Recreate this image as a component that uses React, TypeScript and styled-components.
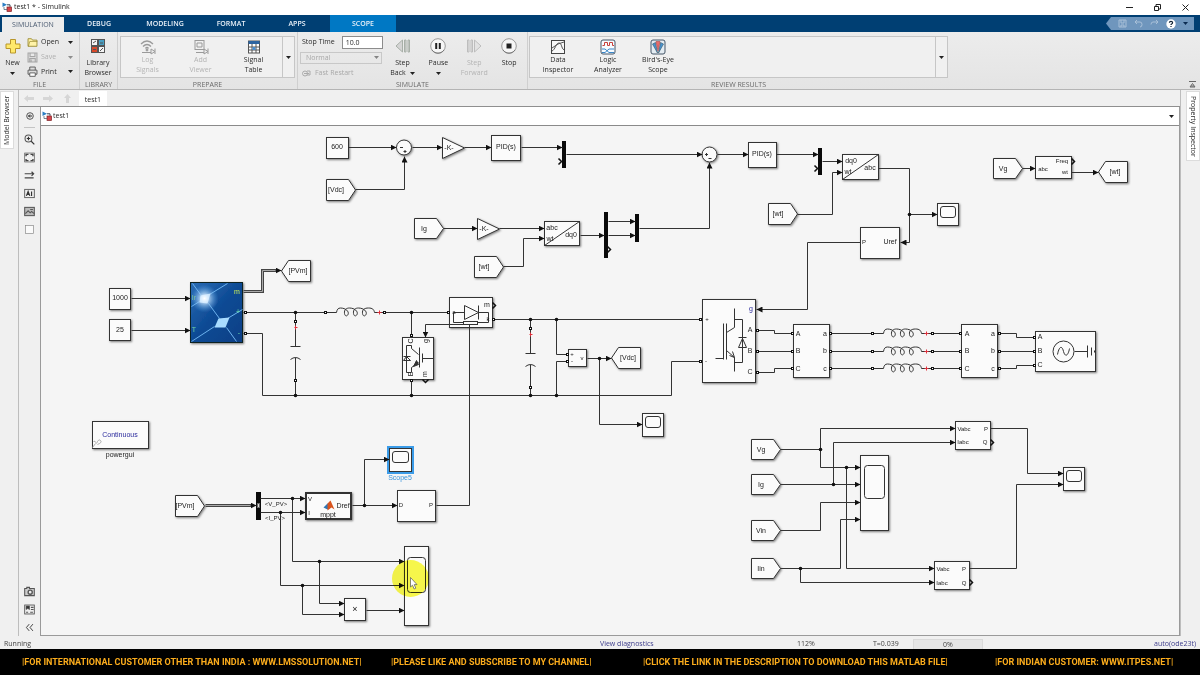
import React from "react";
import styled, { createGlobalStyle, css } from "styled-components";

const GlobalStyle = createGlobalStyle`
  * { box-sizing: border-box; }
  html, body { margin: 0; height: 100%; overflow: hidden; }
  body { font-family: "Open Sans", "Noto Sans", sans-serif; font-size: 7px; line-height: 10px; color: #2b2b2b; background: #f0f0f0; }
  button, input, select { font: inherit; color: inherit; margin: 0; padding: 0; border: 0; background: none; }
  svg { display: block; }
`;

const line = "#333";

/* ---------- window frame ---------- */

const Window = styled.div`
  min-height: 100vh;
  display: flex;
  flex-direction: column;
`;

const TitleBar = styled.header`
  height: 15px;
  flex: none;
  display: flex;
  align-items: center;
  gap: 2px;
  padding: 0 10px 1px 2px;
  background: #fff;
  color: #222;
`;

const WindowButtons = styled.div`
  margin-left: auto;
  display: flex;
  gap: 19px;
`;

const IconButton = styled.button`
  display: flex;
  align-items: center;
  justify-content: center;
  min-width: 9px;
`;

const TabBar = styled.nav`
  height: 17px;
  flex: none;
  display: flex;
  background: #003f73;
`;

const RibbonTab = styled.button<{ $kind?: "active" | "context" }>`
  width: 66px;
  font-weight: 600;
  color: #e8f0f8;
  ${(p) => p.$kind === "active" && css`
    margin: 2px 2px 0 2px;
    width: 62px;
    background: #ececec;
    color: #4a5a70;
    font-weight: 400;
  `}
  ${(p) => p.$kind === "context" && css`background: #0078c4;`}
`;

const QuickAccess = styled.div`
  margin: 2px 6px 2px auto;
  width: 88px;
  display: flex;
  align-items: center;
  gap: 7px;
  padding-left: 12px;
  background: #6f96bd;
  clip-path: polygon(5px 0, 100% 0, 100% 100%, 5px 100%, 0 50%);
`;

/* ---------- ribbon ---------- */

const Ribbon = styled.section`
  height: 58px;
  flex: none;
  display: flex;
  position: relative;
  background: linear-gradient(#ececec, #e4e4e4);
  border-bottom: 1px solid #b4b4b4;
`;

const Group = styled.div<{ $width?: number }>`
  ${(p) => (p.$width ? `width: ${p.$width}px; flex: none;` : "flex: 1; margin-right: 250px;")}
  display: flex;
  flex-direction: column;
  border-right: 1px solid ${(p) => (p.$width ? "#cfcfcf" : "transparent")};
`;

const GroupBody = styled.div<{ $pad?: string }>`
  flex: none;
  height: 48px;
  display: flex;
  padding: ${(p) => p.$pad || "4px 2px 0"};
`;

const GroupLabel = styled.div`
  height: 9px;
  line-height: 10px;
  text-align: center;
  color: #6a6a6a;
  white-space: nowrap;
`;

const BigButton = styled.button<{ $width: number }>`
  width: ${(p) => p.$width}px;
  display: flex;
  flex-direction: column;
  align-items: center;
  padding-top: 2px;
  gap: 4px;
  white-space: nowrap;
  &:disabled { color: #b4b4b4; }
  &:disabled svg { opacity: 0.55; }
`;

const Caption = styled.span`
  display: flex;
  flex-direction: column;
  align-items: center;
`;

const CaptionLine = styled.span`
  height: 10px;
  display: flex;
  align-items: center;
  gap: 4px;
`;

const SmallStack = styled.div`
  display: flex;
  flex-direction: column;
`;

const SmallButton = styled.button`
  height: 15px;
  width: 50px;
  display: grid;
  grid-template-columns: 11px 24px 6px;
  column-gap: 3px;
  padding-left: 2px;
  align-items: center;
  text-align: left;
  padding-bottom: 2px;
  &:disabled { color: #b0b0b0; }
  &:disabled svg { opacity: 0.45; }
`;

const Gallery = styled.div<{ $inset?: number }>`
  flex: 1;
  height: 42px;
  display: flex;
  padding-left: ${(p) => p.$inset || 0}px;
  border: 1px solid #c6c6c6;
  background: #f0f0f0;
  ${BigButton} { gap: 0; }
`;

const GalleryMore = styled.button`
  margin-left: auto;
  width: 12px;
  display: flex;
  align-items: center;
  justify-content: center;
  border-left: 1px solid #c6c6c6;
`;

const RunSettings = styled.div`
  width: 84px;
  display: flex;
  flex-direction: column;
  gap: 4px;
`;

const StopField = styled.label`
  display: flex;
  align-items: center;
  justify-content: space-between;
  padding-left: 2px;
  padding-right: 1px;
  height: 12px;
`;

const StopInput = styled.input`
  width: 41px;
  height: 13px;
  padding-left: 3px;
  border: 1px solid #8c8c8c;
  background: #fff;
`;

const ModeWrap = styled.div`
  position: relative;
  height: 12px;
  svg { position: absolute; right: 5px; top: 4px; opacity: 0.5; }
`;

const ModeSelect = styled.select`
  appearance: none;
  width: 82px;
  height: 12px;
  padding-left: 5px;
  border: 1px solid #c8c8c8;
  color: #a8a8a8;
  opacity: 1;
`;

const FastRestart = styled.button`
  display: flex;
  align-items: center;
  gap: 4px;
  padding-left: 2px;
  color: #a8a8a8;
`;

const Collapse = styled.button`
  position: absolute;
  right: 4px;
  bottom: 1px;
`;

/* ---------- editor area ---------- */

const Main = styled.div`
  flex: 1;
  display: flex;
  min-height: 0;
`;

const Dock = styled.aside<{ $side: "left" | "right" }>`
  flex: none;
  width: ${(p) => (p.$side === "left" ? 19 : 20)}px;
  padding-top: 1px;
  display: flex;
  align-items: flex-start;
  justify-content: ${(p) => (p.$side === "left" ? "flex-start" : "flex-end")};
  border-${(p) => (p.$side === "left" ? "right" : "left")}: 1px solid #bdbdbd;
`;

const DockTab = styled.button<{ $up?: boolean; $height: number }>`
  width: 14px;
  height: ${(p) => p.$height}px;
  background: #fff;
  border: 1px solid #dcdcdc;
  writing-mode: vertical-rl;
  white-space: nowrap;
  ${(p) => p.$up && css`transform: rotate(180deg);`}
`;

const Editor = styled.div`
  flex: 1;
  min-width: 0;
  display: flex;
  flex-direction: column;
`;

const DocTabs = styled.div`
  height: 17px;
  flex: none;
  display: flex;
  align-items: center;
  gap: 8px;
  padding: 1px 0 0 5px;
  border-bottom: 1px solid #8f8f8f;
  ${IconButton} { width: 11px; }
`;

const DocTab = styled.button`
  align-self: stretch;
  width: 28px;
  margin-left: -2px;
  padding-top: 2px;
  background: #fff;
`;

const Workspace = styled.div`
  flex: 1;
  min-height: 0;
  display: flex;
`;

const Palette = styled.div`
  width: 21px;
  flex: none;
  display: flex;
  flex-direction: column;
  ${IconButton} { height: 18px; }
`;

const PaletteRule = styled.hr`
  width: 11px;
  height: 1px;
  margin: 2px auto;
  border: 0;
  background: #c4c4c4;
`;

const Spring = styled.div`flex: 1;`;

const Sheet = styled.div`
  flex: 1;
  min-width: 0;
  display: flex;
  flex-direction: column;
  border: 1px solid #9a9a9a;
  border-top: 0;
`;

const PathBar = styled.div`
  height: 19px;
  flex: none;
  display: flex;
  align-items: center;
  gap: 1px;
  padding: 0 3px 0 1px;
  background: #fff;
  border-bottom: 1px solid #8a8a8a;
  ${IconButton}:last-child { margin-left: auto; }
`;

const StatusBar = styled.footer`
  height: 13px;
  flex: none;
  display: grid;
  grid-template-columns: 596fr 197fr 76fr 40fr 70px 213fr;
  align-items: center;
  padding: 3px 4px 0;
  background: #f0f0f0;
  white-space: nowrap;
  color: #444;
`;

const StatusLink = styled.a<{ $end?: boolean }>`
  color: #3c3c8c;
  text-decoration: none;
  justify-self: ${(p) => (p.$end ? "end" : "start")};
`;

const Progress = styled.span`
  height: 10px;
  line-height: 9px;
  text-align: center;
  background: #e6e6e6;
  border: 1px solid #dadada;
  border-bottom: 0;
`;

const Banner = styled.div`
  height: 26px;
  flex: none;
  display: grid;
  grid-template-columns: 369fr 252fr 352fr 205fr;
  align-items: center;
  padding-left: 22px;
  background: #000;
  color: #fbac1c;
  font: 700 9px/16px Roboto, "Liberation Sans", sans-serif;
  white-space: nowrap;
`;

/* ---------- diagram canvas ---------- */

/* Model coordinates of the canvas's top left corner. */
const ORIGIN = { x: 41, y: 126 };

const Canvas = styled.main`
  flex: 1;
  position: relative;
  overflow: hidden;
  background: #f5f5f5;
  color: #222;
  font-family: "Liberation Sans", Arial, sans-serif;
`;

type Box = { $x: number; $y: number; $w: number; $h: number };

const place = css<{ $x: number; $y: number }>`
  position: absolute;
  left: ${(p) => p.$x - ORIGIN.x}px;
  top: ${(p) => p.$y - ORIGIN.y}px;
`;

const Block = styled.div<Box & { $thick?: boolean; $selected?: boolean }>`
  ${place}
  width: ${(p) => p.$w}px;
  height: ${(p) => p.$h}px;
  border: ${(p) => (p.$thick ? 2 : 1)}px solid ${line};
  background: #fbfbfb;
  box-shadow: 1px 1px 2px rgba(0, 0, 0, 0.5);
  ${(p) => p.$selected && css`box-shadow: 0 0 0 2px #3a9be8;`}
`;

const Screen = styled.div<{ $h: number }>`
  margin: 2px 2px 0;
  height: ${(p) => p.$h}px;
  border: 1px solid ${line};
  border-radius: 3px;
`;

const Bar = styled.div<Box>`
  ${place}
  width: ${(p) => p.$w}px;
  height: ${(p) => p.$h}px;
  background: #0a0a0a;
`;

const Text = styled.span<{ $x: number; $y: number; $size?: number; $color?: string; $turn?: boolean }>`
  position: absolute;
  left: ${(p) => p.$x - ORIGIN.x - 30}px;
  top: ${(p) => p.$y - ORIGIN.y - 4}px;
  width: 60px;
  line-height: 8px;
  text-align: center;
  white-space: nowrap;
  font-size: ${(p) => p.$size || 7}px;
  color: ${(p) => p.$color || "#222"};
  ${(p) => p.$turn && css`transform: rotate(-90deg);`}
`;

const Shape = styled.svg`
  position: absolute;
  left: 0;
  top: 0;
  overflow: visible;
`;

const Halo = styled.div<{ $x: number; $y: number }>`
  ${place}
  width: 37px;
  height: 37px;
  border-radius: 50%;
  background: #fafa4c;
  mix-blend-mode: multiply;
`;

const Pointer = styled.svg<{ $x: number; $y: number }>`
  ${place}
`;

const Layer = ({ children }: { children: React.ReactNode }) => (
  <Shape width="1138" height="509" viewBox={`${ORIGIN.x} ${ORIGIN.y} 1138 509`} aria-hidden="true">
    <g transform="translate(.5 .5)" fill="none" stroke={line} strokeWidth="1">{children}</g>
  </Shape>
);

type Tag = { x: number; y: number; text: string; w?: number; h?: number; left?: boolean };
const tags: Tag[] = [
  { x: 326, y: 179, text: "[Vdc]" },
  { x: 414, y: 218, text: "Ig", h: 20 },
  { x: 474, y: 256, text: "[wt]" },
  { x: 768, y: 203, text: "[wt]" },
  { x: 993, y: 158, text: "Vg", h: 20 },
  { x: 1098, y: 161, text: "[wt]", left: true },
  { x: 281, y: 260, text: "[PVm]", left: true },
  { x: 611, y: 347, text: "[Vdc]", left: true },
  { x: 175, y: 495, text: "[PVm]" },
  { x: 751, y: 439, text: "Vg", h: 20 },
  { x: 751, y: 474, text: "Ig", h: 20 },
  { x: 751, y: 520, text: "Vin", h: 20 },
  { x: 751, y: 558, text: "Iin", h: 20 },
];

type Pt = [number, number];
const wires: { p: Pt[]; arrow?: boolean }[] = [
  { p: [[348, 147], [396, 147]], arrow: true },
  { p: [[355, 189], [404, 189], [404, 156]], arrow: true },
  { p: [[412, 147], [442, 147]], arrow: true },
  { p: [[464, 147], [491, 147]], arrow: true },
  { p: [[521, 147], [562, 147]], arrow: true },
  { p: [[566, 154], [702, 154]], arrow: true },
  { p: [[443, 228], [477, 228]], arrow: true },
  { p: [[499, 228], [544, 228]], arrow: true },
  { p: [[503, 266], [523, 266], [523, 238], [544, 238]], arrow: true },
  { p: [[580, 235], [604, 235]], arrow: true },
  { p: [[608, 221], [635, 221]], arrow: true },
  { p: [[608, 235], [635, 235]], arrow: true },
  { p: [[639, 228], [709, 228], [709, 162]], arrow: true },
  { p: [[717, 154], [748, 154]], arrow: true },
  { p: [[776, 154], [818, 154]], arrow: true },
  { p: [[822, 161], [842, 161]], arrow: true },
  { p: [[797, 214], [832, 214], [832, 172], [842, 172]], arrow: true },
  { p: [[878, 168], [909, 168], [909, 242], [900, 242]], arrow: true },
  { p: [[909, 214], [937, 214]], arrow: true },
  { p: [[860, 242], [807, 242], [807, 309], [756, 309]], arrow: true },
  { p: [[1022, 168], [1035, 168]], arrow: true },
  { p: [[1071, 172], [1098, 172]], arrow: true },
  { p: [[131, 298], [190, 298]], arrow: true },
  { p: [[131, 330], [190, 330]], arrow: true },
  { p: [[243, 312], [325, 312]] },
  { p: [[384, 312], [448, 312]] },
  { p: [[243, 333], [262, 333], [262, 395], [671, 395], [671, 361], [700, 361]] },
  { p: [[411, 312], [411, 335]] },
  { p: [[411, 380], [411, 395]] },
  { p: [[436, 505], [469, 505], [469, 324], [425, 324], [425, 337]], arrow: true },
  { p: [[493, 319], [700, 319]] },
  { p: [[556, 319], [556, 354], [567, 354]] },
  { p: [[556, 395], [556, 361], [567, 361]] },
  { p: [[587, 358], [611, 358]], arrow: true },
  { p: [[599, 358], [599, 424], [642, 424]], arrow: true },
  { p: [[757, 330], [774, 330], [774, 333], [792, 333]] },
  { p: [[757, 351], [792, 351]] },
  { p: [[757, 372], [774, 372], [774, 368], [792, 368]] },
  { p: [[999, 333], [1016, 333], [1016, 337], [1034, 337]] },
  { p: [[999, 351], [1034, 351]] },
  { p: [[999, 368], [1016, 368], [1016, 365], [1034, 365]] },
  { p: [[260, 498], [305, 498]], arrow: true },
  { p: [[260, 512], [305, 512]], arrow: true },
  { p: [[352, 505], [397, 505]], arrow: true },
  { p: [[364, 505], [364, 459], [389, 459]], arrow: true },
  { p: [[292, 498], [292, 561], [404, 561]], arrow: true },
  { p: [[280, 512], [280, 585], [404, 585]], arrow: true },
  { p: [[319, 561], [319, 603], [344, 603]], arrow: true },
  { p: [[302, 585], [302, 614], [344, 614]], arrow: true },
  { p: [[366, 610], [404, 610]], arrow: true },
  { p: [[780, 449], [820, 449], [820, 428], [955, 428]], arrow: true },
  { p: [[820, 449], [820, 467], [860, 467]], arrow: true },
  { p: [[846, 467], [846, 568], [934, 568]], arrow: true },
  { p: [[780, 484], [860, 484]], arrow: true },
  { p: [[833, 484], [833, 442], [955, 442]], arrow: true },
  { p: [[780, 530], [820, 530], [820, 502], [860, 502]], arrow: true },
  { p: [[780, 568], [840, 568], [840, 519], [860, 519]], arrow: true },
  { p: [[800, 568], [800, 582], [934, 582]], arrow: true },
  { p: [[990, 428], [1027, 428], [1027, 473], [1063, 473]], arrow: true },
  { p: [[969, 568], [1016, 568], [1016, 484], [1063, 484]], arrow: true },
];

const dots: Pt[] = [
  [909, 214], [295, 312], [411, 312], [295, 395], [411, 395], [530, 319], [556, 319], [530, 395], [556, 395],
  [599, 358], [292, 498], [280, 512], [364, 505], [319, 561], [302, 585], [820, 449], [846, 467], [833, 484], [800, 568],
];

const phases = [333, 351, 368];
const ports: Pt[] = [
  [245, 312], [245, 333], [325, 312], [384, 312], [448, 312], [411, 335], [411, 380], [295, 321], [295, 380],
  [493, 319], [530, 328], [530, 387], [567, 354], [567, 361], [700, 319], [700, 361],
  [757, 330], [757, 351], [757, 372], [1034, 337], [1034, 351], [1034, 365],
  ...phases.flatMap((y): Pt[] => [[792, y], [830, y], [872, y], [932, y], [960, y], [999, y]]),
];

const chevrons: { x: number; y: number; turn?: number }[] = [
  { x: 558, y: 161 }, { x: 814, y: 168 }, { x: 607, y: 249 }, { x: 1071, y: 161 }, { x: 492, y: 305 },
  { x: 990, y: 442 }, { x: 969, y: 582 }, { x: 425, y: 379, turn: 90 },
];

type Label = [number, number, string, number?, string?];
const labels: Label[] = [
  [337, 147, "600"], [449, 148, "-K-"], [506, 147, "PID(s)"], [762, 154, "PID(s)"], [484, 229, "-K-"],
  [552, 228, "abc"], [550, 239, "wt"], [571, 235, "dq0"],
  [851, 161, "dq0"], [848, 172, "wt"], [870, 168, "abc"],
  [864, 242, "P", 6], [890, 242, "Uref"],
  [1043, 169, "abc", 6], [1062, 161, "Freq", 6], [1065, 172, "wt", 6],
  [120, 298, "1000"], [120, 330, "25"],
  [487, 305, "m"], [454, 312, "a", 6], [488, 319, "k", 6],
  [572, 354, "+", 6], [572, 361, "-", 6], [582, 358, "v", 6],
  [707, 319, "+", 6], [706, 361, "-", 6], [751, 309, "g", 7, "#2a2a9c"],
  [750, 330, "A"], [750, 351, "B"], [750, 372, "C"],
  [798, 334, "A"], [798, 351, "B"], [798, 369, "C"], [825, 334, "a"], [825, 351, "b"], [825, 369, "c"],
  [967, 334, "A"], [967, 351, "B"], [967, 369, "C"], [993, 334, "a"], [993, 351, "b"], [993, 369, "c"],
  [1040, 337, "A"], [1040, 351, "B"], [1040, 365, "C"],
  [120, 435, "Continuous", 7, "#2a2a9c"], [120, 455, "powergui"],
  [276, 504, "<V_PV>", 6], [275, 518, "<I_PV>", 6],
  [310, 499, "V", 6], [309, 513, "I", 6], [343, 506, "Dref", 7], [328, 515, "mppt"],
  [401, 505, "D", 6], [431, 505, "P", 6], [400, 478, "Scope5", 7, "#3a94dc"],
  [355, 609, "×", 9],
  [964, 429, "Vabc", 6], [963, 442, "Iabc", 6], [986, 429, "P", 6], [985, 442, "Q", 6],
  [943, 569, "Vabc", 6], [942, 583, "Iabc", 6], [964, 569, "P", 6], [964, 583, "Q", 6],
];

const Inductor = ({ x, y }: { x: number; y: number }) => (
  <g transform={`translate(${x} ${y})`}>
    <path d="M0 0H11C11.500-3 12.500-4.500 15-4.500C20-4.500 24-1 22.500 2C21.500 4 19.500 4 19 1C18.500-3 21-4.500 24-4.500C29-4.500 33-1 31.500 2C30.500 4 28.500 4 28 1C27.500-3 30-4.500 33-4.500C38-4.500 42-1 40.500 2C39.500 4 37.500 4 37 1C36.500-3 39-4.500 43-4.500C47-4.500 48.500-3 49 0H60" />
    <path d="M52 0h4M54-2v4" stroke="#e0303c" />
  </g>
);

const Capacitor = ({ x, top, bottom }: { x: number; top: number; bottom: number }) => {
  const mid = top + 25;
  return (
    <g>
      <path d={`M${x} ${top - 9}V${mid}M${x - 5} ${mid}h10M${x} ${mid + 11}V${bottom}M${x - 5} ${mid + 13}q5-4 10 0`} />
      <path d={`M${x - 1} ${top + 6}h3M${x} ${top + 4}v4`} stroke="#e0303c" />
    </g>
  );
};

const TagBlock = ({ x, y, text, w = 29, h = 21, left }: Tag) => (
  <>
    <Layer>
      <polygon
        fill="#fbfbfb"
        filter="url(#drop)"
        points={left
          ? `${x},${y + h / 2} ${x + 7},${y} ${x + w},${y} ${x + w},${y + h} ${x + 7},${y + h}`
          : `${x},${y} ${x + w - 7},${y} ${x + w},${y + h / 2} ${x + w - 7},${y + h} ${x},${y + h}`}
      />
    </Layer>
    <Text $x={left ? x + 17 : x + 10} $y={y + 11}>{text}</Text>
  </>
);

const Scope = ({ x, y, w, h, screen, selected }: { x: number; y: number; w: number; h: number; screen: number; selected?: boolean }) => (
  <Block $x={x} $y={y} $w={w} $h={h} $selected={selected}>
    <Screen $h={screen} />
  </Block>
);

const plain: [number, number, number, number][] = [
  [326, 137, 23, 22], [491, 135, 30, 26], [748, 142, 29, 26], [544, 221, 36, 25], [842, 154, 37, 26],
  [860, 227, 40, 32], [1035, 156, 37, 23], [109, 288, 22, 22], [109, 319, 22, 22],
  [449, 297, 44, 31], [402, 337, 32, 43], [568, 349, 19, 18], [702, 299, 54, 84],
  [793, 324, 37, 54], [961, 324, 37, 54], [1035, 331, 61, 41], [92, 421, 57, 28],
  [397, 490, 39, 32], [344, 598, 22, 23], [955, 421, 36, 29], [934, 561, 36, 29],
];

const Diagram = () => (
  <Canvas>
    <Layer>
      <defs>
        <filter id="drop" x="-20%" y="-20%" width="150%" height="150%">
          <feDropShadow dx="1" dy="1" stdDeviation="0.800" floodOpacity="0.5" />
        </filter>
        <marker id="arrow" viewBox="0 0 6 6" refX="6" refY="3" markerWidth="6" markerHeight="6" orient="auto" markerUnits="userSpaceOnUse">
          <path d="M0 0L6 3L0 6z" fill="#111" stroke="none" />
        </marker>
        <radialGradient id="glow">
          <stop offset="0" stopColor="#fff" />
          <stop offset="0.300" stopColor="#cfe8ff" stopOpacity="0.800" />
          <stop offset="1" stopColor="#4fa0e8" stopOpacity="0" />
        </radialGradient>
        <linearGradient id="cell" x1="0" y1="0" x2="1" y2="1">
          <stop offset="0" stopColor="#2a6cb4" />
          <stop offset="0.500" stopColor="#0d4a94" />
          <stop offset="1" stopColor="#0b3f85" />
        </linearGradient>
      </defs>
      <circle cx="403.500" cy="147" r="7.500" fill="#fbfbfb" filter="url(#drop)" />
      <circle cx="709" cy="154" r="7.500" fill="#fbfbfb" filter="url(#drop)" />
      <path d="M399.500 147h3M403 151h3M404.500 149.500v3M704.500 154h3M706 152.500v3M708 158h3" />
      <path d="M442 137L464 147.500L442 158zM477 218L499 228.500L477 239z" fill="#fbfbfb" filter="url(#drop)" />
    </Layer>

    {tags.map((t) => <TagBlock key={`${t.x}-${t.y}`} {...t} />)}
    {plain.map(([x, y, w, h]) => <Block key={`${x}-${y}`} $x={x} $y={y} $w={w} $h={h} />)}
    <Block $x={305} $y={492} $w={47} $h={28} $thick />

    <Scope x={937} y={203} w={22} h={23} screen={12} />
    <Scope x={642} y={413} w={22} h={24} screen={12} />
    <Scope x={1063} y={467} w={22} h={24} screen={12} />
    <Scope x={389} y={448} w={23} h={24} screen={12} selected />
    <Block $x={404} $y={546} $w={25} $h={80} />
    <Block $x={860} $y={455} $w={29} $h={76} />

    <Bar $x={562} $y={141} $w={4} $h={27} />
    <Bar $x={818} $y={148} $w={4} $h={27} />
    <Bar $x={604} $y={212} $w={4} $h={46} />
    <Bar $x={635} $y={214} $w={4} $h={28} />
    <Bar $x={256} $y={492} $w={5} $h={28} />

    <Layer>
      <rect x="407" y="557" width="18" height="35" rx="3" />
      <rect x="864" y="465" width="20" height="33" rx="3" />
      <path d="M544 245L579 221M842 179L878 154" />

      {/* solar panel */}
      <rect x="190" y="282" width="52" height="60" fill="url(#cell)" stroke="#122" filter="url(#drop)" />
      <path d="M192 283L200 294M209 294L227 283M191 306L199 301M208 303L219 318M227 318L242 309M191 341L214 326M226 327L236 341" stroke="#6cb2ee" />
      <path d="M200 295L210 293L207 303L199 302z" fill="#e8f6ff" stroke="none" />
      <path d="M218 318L229 317L225 327L214 327z" fill="#a8dcff" stroke="none" />
      <circle cx="204" cy="298" r="14" fill="url(#glow)" stroke="none" />

      {/* boost diode */}
      <path d="M453 312H464M478 312H488V322H477M453 312V322H463M464 305V319L478 312zM478 305V319" />
      <rect x="463" y="321" width="14" height="3" fill="#fbfbfb" />

      {/* boost switch */}
      <path d="M411 345V348L418 354M411 372V367L418 362M411 345H406V372H411M403 356H410M403 360L406 356L410 360zM419 347V367M422 353V362M422 358H433" />
      <path d="M413 366L418 364L416 360z" fill={line} />

      {/* inverter bridge arm */}
      <path d="M734 308V327L726 332M734 371V357L726 350M734 319H742V362H734M738 337H746M738 347H746L742 338zM723 323V359M726 323V359M715 358H723M729 355L734 357L732 351" />

      {/* grid source */}
      <circle cx="1063" cy="351" r="10.500" />
      <path d="M1057 354C1059 344 1062 346 1063 351C1065 358 1068 354 1069 348M1074 351H1087M1087 345V357M1091 347V355M1094 350V352" />

      {/* powergui link badge */}
      <path d="M92 447l3-4M96 443q2-5 4-3q2 2-3 4M93 441q2-1 2 1" stroke="#aaa" />

      {/* mppt function logo */}
      <path d="M323 507L327 503L331 505L327 509z" fill="#2f77b5" stroke="none" />
      <path d="M327 503L330 500L334 509L331 507L327 510z" fill="#d9541e" stroke="none" />
      <rect x="257" y="503" width="2" height="4" fill="#ddd" stroke="#666" />

      <Inductor x={325} y={312} />
      {phases.map((y) => (
        <g key={y}>
          <path d={`M830 ${y}H872M932 ${y}H960`} />
          <Inductor x={872} y={y} />
        </g>
      ))}
      <Capacitor x={295} top={321} bottom={395} />
      <Capacitor x={530} top={328} bottom={395} />

      {/* bus signals */}
      <path d="M243 291H262V270H276M205 505H251" stroke="#444" strokeWidth="3" />
      <path d="M243 291H262V270H276M205 505H251" stroke="#aaa" />
      <path d="M275 270H281" markerEnd="url(#arrow)" />
      <path d="M250 505H256" markerEnd="url(#arrow)" />

      {wires.map((w, i) => (
        <polyline key={i} points={w.p.map((q) => q.join(",")).join(" ")} markerEnd={w.arrow ? "url(#arrow)" : undefined} />
      ))}
      {dots.map(([x, y]) => <circle key={`${x}-${y}`} cx={x} cy={y} r="1.800" fill="#111" stroke="none" />)}
      {ports.map(([x, y]) => <rect key={`${x}-${y}`} x={x - 1} y={y - 1} width="2" height="2" fill="#fff" stroke="#111" />)}
      {chevrons.map((c) => (
        <path key={`${c.x}-${c.y}`} transform={`translate(${c.x} ${c.y}) rotate(${c.turn || 0})`} d="M0-3L3 0L0 3" stroke="#111" strokeWidth="1.500" />
      ))}
    </Layer>

    {labels.map(([x, y, text, size, color]) => (
      <Text key={`${x}-${y}`} $x={x} $y={y} $size={size} $color={color}>{text}</Text>
    ))}
    <Text $x={411} $y={341} $turn>C</Text>
    <Text $x={426} $y={341} $turn>g</Text>
    <Text $x={411} $y={374} $turn>E</Text>
    <Text $x={425} $y={374} $turn>m</Text>
    <Text $x={194} $y={298} $color="#7fc89a">Ir</Text>
    <Text $x={194} $y={330} $color="#6ccfa4">T</Text>
    <Text $x={237} $y={292} $color="#c8ec58">m</Text>
    <Text $x={238} $y={312} $color="#6ce8a8">+</Text>
    <Text $x={239} $y={333} $color="#6ce8a8">-</Text>

    <Halo $x={392} $y={560} />
    <Pointer $x={410} $y={577} width="8" height="13" viewBox="0 0 8 13" aria-hidden="true">
      <path d="M.5.5V10L2.500 8.200L4.200 12L5.800 11.200L4.200 7.600H7z" fill="#fff" stroke="#555" strokeWidth=".7" />
    </Pointer>
  </Canvas>
);

/* ---------- icons ---------- */

const Caret = ({ color = "#222" }: { color?: string }) => (
  <svg width="5" height="3" viewBox="0 0 5 3"><path d="M0 0h5L2.500 3z" fill={color} /></svg>
);

const ModelIcon = () => (
  <svg width="10" height="10" viewBox="0 0 10 10">
    <path d="M.5.5L5 2.800L.5 5z" fill="#2b7fc4" />
    <path d="M5 2.800h3v2" fill="none" stroke="#345" />
    <rect x="5" y="5" width="4.500" height="4.500" fill="#d8444a" stroke="#7c2024" strokeWidth=".7" />
    <path d="M2 5v2.500h3" fill="none" stroke="#567" strokeWidth=".8" />
  </svg>
);

const Icon = ({ children, size = 16 }: { children: React.ReactNode; size?: number }) => (
  <svg width={size} height={size} viewBox="0 0 16 16" fill="none" stroke="#555" strokeWidth="1" aria-hidden="true">{children}</svg>
);

const PlusIcon = () => <Icon><path d="M5.500 1.500h5v4.500h4.500v4.500h-4.500V15h-5v-4.500H1V6h4.500z" fill="#ffe96b" stroke="#b8962c" /></Icon>;
const FolderIcon = () => <Icon size={11}><path d="M1.500 13.500v-11h5l1.500 2h6.500v9z" fill="#fff3a8" stroke="#9a8a30" strokeWidth="1.300" /><path d="M2 13.500l2-7h11" stroke="#9a8a30" /></Icon>;
const SaveIcon = () => <Icon size={11}><path d="M1.500 1.500h13v13h-13zM4.500 1.500v5h7v-5M4 14.500V9.500h8v5M6 11v3" strokeWidth="1.500" fill="#ccc" /></Icon>;
const PrintIcon = () => <Icon size={11}><path d="M4 6V1.500h8V6M1.500 6h13v6h-13z" fill="#ddd" strokeWidth="1.300" /><path d="M4 10h8v5H4z" fill="#fff" strokeWidth="1.300" /></Icon>;
const LibraryIcon = () => (
  <Icon>
    <rect x="1.500" y="1.500" width="6" height="6" fill="#f4f4f4" /><rect x="8.500" y="1.500" width="6" height="6" fill="#49a0c4" />
    <rect x="1.500" y="8.500" width="6" height="6" fill="#d8492a" /><rect x="8.500" y="8.500" width="6" height="6" fill="#f4f4f4" />
    <path d="M3 5l3-2M10 5h3M3 11.500h3M10 13l3-3" />
  </Icon>
);
const LogIcon = () => <Icon><path d="M1 5q6-6 12 0M3 7.500q4-4 8 0M5.500 9.500q1.500-2 3 0" strokeWidth="1.300" /><circle cx="7" cy="11" r="1" fill="#555" /><path d="M2 13.500h9M11 10v5M11 10l4 2.500l-4 2.500M15 9.500v5.500" /></Icon>;
const ViewerIcon = () => <Icon><rect x="2" y="1.500" width="9" height="9" /><path d="M4 4h5v4H4zM3 13.500h8M11 10v5M11 10l4 2.500l-4 2.500M15 9.500v5.500" /></Icon>;
const TableIcon = () => <Icon><rect x="2.500" y="2" width="11" height="12" fill="#fff" /><path d="M2.500 3.500h11" stroke="#2d64a0" strokeWidth="3" /><path d="M2.500 8h11M2.500 11h11M6 5v9M10 5v9" /><path d="M6.500 8h3v3h-3z" fill="#4b8fd0" stroke="none" /></Icon>;
const Round = ({ children }: { children: React.ReactNode }) => <Icon><circle cx="8" cy="8" r="7.300" fill="#f6f6f6" stroke="#999" /><path d="M2 12a7.300 7.300 0 0 0 12 0" stroke="#777" />{children}</Icon>;
const PauseIcon = () => <Round><path d="M6.200 5v6M9.800 5v6" stroke="#222" strokeWidth="2" /></Round>;
const StopIcon = () => <Round><path d="M5.500 5.500h5v5h-5z" fill="#222" stroke="none" /></Round>;
const BackIcon = () => <Icon><path d="M7.500 2v12L1 8zM9.500 2v12h1.500V2zM13 2v12h1.500V2z" fill="#d4d4d4" stroke="#a8b0a8" /></Icon>;
const ForwardIcon = () => <Icon><path d="M8.500 2v12L15 8zM5 2v12h1.500V2zM1.500 2v12H3V2z" fill="#ddd" stroke="#999" /></Icon>;
const InspectorIcon = () => <Icon><rect x="1.500" y="1.500" width="13" height="13" fill="#f8f8f8" stroke="#444" /><path d="M2 12C5 11 6 4 9 4S11 9 14 11M2 9q6-5 12-6" stroke="#555" /></Icon>;
const LogicIcon = () => <Icon><rect x="1" y="1" width="14" height="14" rx="2" fill="#f6fbff" stroke="#456" /><path d="M2.500 6.500h2v-3h3v3h2v-3h3v3h1.500" stroke="#c8403a" /><path d="M2 10h3l4 3.500h5M2 13.500h3L9 10h5" stroke="#3a86c8" /></Icon>;
const BirdIcon = () => (
  <Icon>
    <rect x="1" y="1" width="14" height="14" rx="2" fill="#e4ecf2" stroke="#456" />
    <path d="M7.500 14L2.500 5l3-1.500z" fill="#4a94d0" stroke="#356" strokeWidth=".6" />
    <path d="M8.500 14L13.500 5l-3-1.500z" fill="#4a94d0" stroke="#356" strokeWidth=".6" />
    <path d="M8 12L6 2.500h4z" fill="#ea6a6a" stroke="#a44" strokeWidth=".6" />
  </Icon>
);

const paletteTop: [string, React.ReactNode][] = [
  ["Zoom", <Icon size={11} key="z"><circle cx="6.500" cy="6.500" r="5" strokeWidth="1.500" /><path d="M10.500 10.500L15 15M4 6.500h5M6.500 4v5" strokeWidth="1.700" stroke="#333" /></Icon>],
  ["Fit to view", <Icon size={11} key="f"><rect x="1" y="1.500" width="14" height="13" /><path d="M3 6V3.500h3.500M9.500 3.500H13V6M13 10v2.500H9.500M6.500 12.500H3V10" strokeWidth="2" stroke="#444" /></Icon>],
  ["Sample time", <Icon size={11} key="s"><path d="M1 5.500h13M11 2.500l3 3l-3 3M1 11.500h13" strokeWidth="1.700" stroke="#444" /></Icon>],
  ["Annotation", <Icon size={11} key="a"><rect x="1" y="2" width="14" height="12" strokeWidth="1.300" /><path d="M3.500 11.500L6 5l2.500 6.500M4.500 9.500h3M11 5v6.500" strokeWidth="1.700" stroke="#333" /></Icon>],
  ["Image", <Icon size={11} key="i"><rect x="1" y="2" width="14" height="12" strokeWidth="1.500" fill="#bbb" /><path d="M2 11l4-4l3 3l2-2l4 3M9 5h4" strokeWidth="1.500" /></Icon>],
  ["Area", <Icon size={11} key="r"><rect x="2" y="2" width="12" height="12" stroke="#888" fill="#fafafa" /></Icon>],
];

const paletteBottom: [string, React.ReactNode][] = [
  ["Screenshot", <Icon size={11} key="c"><path d="M1 3.500h3v-1.500h4v1.500h7V14H1z" strokeWidth="1.500" fill="#ccc" /><circle cx="9" cy="9" r="3" strokeWidth="2" fill="#eee" /></Icon>],
  ["Browser data", <Icon size={11} key="b"><rect x="1" y="1.500" width="14" height="13" strokeWidth="1.300" /><path d="M3 3h5v5l-2.500-1.500L3 8z" fill="#333" /><path d="M10 5h4M10 8h4M3 12h3M9 12h4" strokeWidth="1.700" /></Icon>],
  ["Collapse palette", <Icon size={9} key="l"><path d="M7.500 2l-5 6l5 6M14 2L9 8l5 6" strokeWidth="1.600" stroke="#333" /></Icon>],
];

const Big = ({ icon, lines, width, caret, caretBelow, disabled }: {
  icon: React.ReactNode; lines: string[]; width: number; caret?: boolean; caretBelow?: boolean; disabled?: boolean;
}) => (
  <BigButton type="button" $width={width} disabled={disabled}>
    {icon}
    <Caption>
      {lines.map((l, i) => (
        <CaptionLine key={l}>{l}{caret && i === lines.length - 1 && <Caret />}</CaptionLine>
      ))}
      {caretBelow && <CaptionLine><Caret /></CaptionLine>}
    </Caption>
  </BigButton>
);

export default function App() {
  return (
    <>
      <GlobalStyle />
      <Window>
        <TitleBar>
          <ModelIcon />
          <span>test1 * - Simulink</span>
          <WindowButtons>
            <IconButton type="button" aria-label="Minimize"><svg width="7" height="7" viewBox="0 0 7 7"><path d="M0 3.500h7" stroke="#222" /></svg></IconButton>
            <IconButton type="button" aria-label="Restore"><svg width="7" height="7" viewBox="0 0 7 7" fill="none" stroke="#222"><path d="M.5 2.500h4v4h-4zM2 2V.5h4.500V5H5" /></svg></IconButton>
            <IconButton type="button" aria-label="Close"><svg width="7" height="7" viewBox="0 0 7 7" stroke="#222"><path d="M.5.5l6 6M6.500.5l-6 6" /></svg></IconButton>
          </WindowButtons>
        </TitleBar>

        <TabBar>
          <RibbonTab type="button" $kind="active">SIMULATION</RibbonTab>
          <RibbonTab type="button">DEBUG</RibbonTab>
          <RibbonTab type="button">MODELING</RibbonTab>
          <RibbonTab type="button">FORMAT</RibbonTab>
          <RibbonTab type="button">APPS</RibbonTab>
          <RibbonTab type="button" $kind="context">SCOPE</RibbonTab>
          <QuickAccess>
            <IconButton type="button" aria-label="Save"><svg width="9" height="9" viewBox="0 0 9 9"><path d="M1 1h7v7H1zM3 1v3h3V1M3 8V6h3v2" fill="none" stroke="#a9c0d8" /></svg></IconButton>
            <IconButton type="button" aria-label="Undo"><svg width="9" height="9" viewBox="0 0 9 9"><path d="M3 1L1 3l2 2M1 3h5q2 0 2 2.500T6 8" fill="none" stroke="#a9c0d8" /></svg></IconButton>
            <IconButton type="button" aria-label="Redo"><svg width="9" height="9" viewBox="0 0 9 9"><path d="M6 1l2 2l-2 2M8 3H3Q1 3 1 5.500" fill="none" stroke="#a9c0d8" /></svg></IconButton>
            <IconButton type="button" aria-label="Help"><svg width="10" height="10" viewBox="0 0 10 10"><circle cx="5" cy="5" r="4.700" fill="#fff" /><path d="M3.400 3.800q0-1.500 1.600-1.500t1.600 1.400q0 .8-1 1.300q-.6.300-.6 1M5 7v1" fill="none" stroke="#123" strokeWidth="1.200" /></svg></IconButton>
            <Caret color="#0a2a50" />
          </QuickAccess>
        </TabBar>

        <Ribbon>
          <Group $width={80}>
            <GroupBody $pad="4px 0 0 0">
              <Big icon={<PlusIcon />} lines={["New"]} width={25} caretBelow />
              <SmallStack>
                <SmallButton type="button"><FolderIcon />Open<Caret /></SmallButton>
                <SmallButton type="button" disabled><SaveIcon />Save<Caret /></SmallButton>
                <SmallButton type="button"><PrintIcon />Print<Caret /></SmallButton>
              </SmallStack>
            </GroupBody>
            <GroupLabel>FILE</GroupLabel>
          </Group>
          <Group $width={38}>
            <GroupBody $pad="4px 0 0 0"><Big icon={<LibraryIcon />} lines={["Library", "Browser"]} width={36} /></GroupBody>
            <GroupLabel>LIBRARY</GroupLabel>
          </Group>
          <Group $width={180}>
            <GroupBody>
              <Gallery>
                <Big icon={<LogIcon />} lines={["Log", "Signals"]} width={53} disabled />
                <Big icon={<ViewerIcon />} lines={["Add", "Viewer"]} width={53} disabled />
                <Big icon={<TableIcon />} lines={["Signal", "Table"]} width={53} />
                <GalleryMore type="button" aria-label="More prepare tools"><Caret /></GalleryMore>
              </Gallery>
            </GroupBody>
            <GroupLabel>PREPARE</GroupLabel>
          </Group>
          <Group $width={230}>
            <GroupBody>
              <RunSettings>
                <StopField>Stop Time<StopInput type="text" defaultValue="10.0" /></StopField>
                <ModeWrap>
                  <ModeSelect aria-label="Simulation mode" disabled defaultValue="Normal"><option>Normal</option></ModeSelect>
                  <Caret />
                </ModeWrap>
                <FastRestart type="button" disabled>
                  <svg width="9" height="7" viewBox="0 0 9 7" fill="none" stroke="#aaa"><circle cx="3" cy="3.500" r="2.500" /><path d="M5 1h3v4H5M2 3.500h5" /></svg>
                  Fast Restart
                </FastRestart>
              </RunSettings>
              <Big icon={<BackIcon />} lines={["Step", "Back"]} width={38} caret />
              <Big icon={<PauseIcon />} lines={["Pause"]} width={34} caretBelow />
              <Big icon={<ForwardIcon />} lines={["Step", "Forward"]} width={38} disabled />
              <Big icon={<StopIcon />} lines={["Stop"]} width={32} />
            </GroupBody>
            <GroupLabel>SIMULATE</GroupLabel>
          </Group>
          <Group>
            <GroupBody $pad="4px 1px 0">
              <Gallery $inset={3}>
                <Big icon={<InspectorIcon />} lines={["Data", "Inspector"]} width={50} />
                <Big icon={<LogicIcon />} lines={["Logic", "Analyzer"]} width={50} />
                <Big icon={<BirdIcon />} lines={["Bird's-Eye", "Scope"]} width={50} />
                <GalleryMore type="button" aria-label="More result tools"><Caret /></GalleryMore>
              </Gallery>
            </GroupBody>
            <GroupLabel>REVIEW RESULTS</GroupLabel>
          </Group>
          <Collapse type="button" aria-label="Collapse ribbon">
            <svg width="7" height="7" viewBox="0 0 7 7" fill="none" stroke="#666"><path d="M0 .5h7M1 6l2.500-3.500L6 6zM2 5h3" /></svg>
          </Collapse>
        </Ribbon>

        <Main>
          <Dock $side="left"><DockTab type="button" $up $height={58}>Model Browser</DockTab></Dock>
          <Editor>
            <DocTabs>
              <IconButton type="button" aria-label="Back"><svg width="11" height="9" viewBox="0 0 11 9"><path d="M0 4.500L4 1v2h6v3H4v2z" fill="#d6d6d6" /></svg></IconButton>
              <IconButton type="button" aria-label="Forward"><svg width="11" height="9" viewBox="0 0 11 9"><path d="M10 4.500L6 1v2H0v3h6v2z" fill="#d6d6d6" /></svg></IconButton>
              <IconButton type="button" aria-label="Up to parent"><svg width="11" height="9" viewBox="0 0 11 9"><path d="M5.500 0L9 4H7v5H4V4H2z" fill="#d6d6d6" /></svg></IconButton>
              <DocTab type="button">test1</DocTab>
            </DocTabs>
            <Workspace>
              <Palette>
                <IconButton type="button" aria-label="Hide browser"><svg width="8" height="8" viewBox="0 0 8 8" fill="none" stroke="#555"><circle cx="4" cy="4" r="3.300" /><path d="M6 4H2.500M4 2.500L2.500 4L4 5.500" stroke="#222" /></svg></IconButton>
                <PaletteRule />
                {paletteTop.map(([name, icon]) => <IconButton type="button" key={name} aria-label={name}>{icon}</IconButton>)}
                <Spring />
                {paletteBottom.map(([name, icon]) => <IconButton type="button" key={name} aria-label={name}>{icon}</IconButton>)}
              </Palette>
              <Sheet>
                <PathBar>
                  <ModelIcon />
                  <span>test1</span>
                  <IconButton type="button" aria-label="Path history"><Caret /></IconButton>
                </PathBar>
                <Diagram />
              </Sheet>
            </Workspace>
          </Editor>
          <Dock $side="right"><DockTab type="button" $height={70}>Property Inspector</DockTab></Dock>
        </Main>

        <StatusBar>
          <span>Running</span>
          <StatusLink href="#diagnostics">View diagnostics</StatusLink>
          <span>112%</span>
          <span>T=0.039</span>
          <Progress>0%</Progress>
          <StatusLink href="#solver" $end>auto(ode23t)</StatusLink>
        </StatusBar>

        <Banner>
          <span>|FOR INTERNATIONAL CUSTOMER OTHER THAN INDIA : WWW.LMSSOLUTION.NET|</span>
          <span>|PLEASE LIKE AND SUBSCRIBE TO MY CHANNEL|</span>
          <span>|CLICK THE LINK IN THE DESCRIPTION TO DOWNLOAD THIS MATLAB FILE|</span>
          <span>|FOR INDIAN CUSTOMER: WWW.ITPES.NET|</span>
        </Banner>
      </Window>
    </>
  );
}
